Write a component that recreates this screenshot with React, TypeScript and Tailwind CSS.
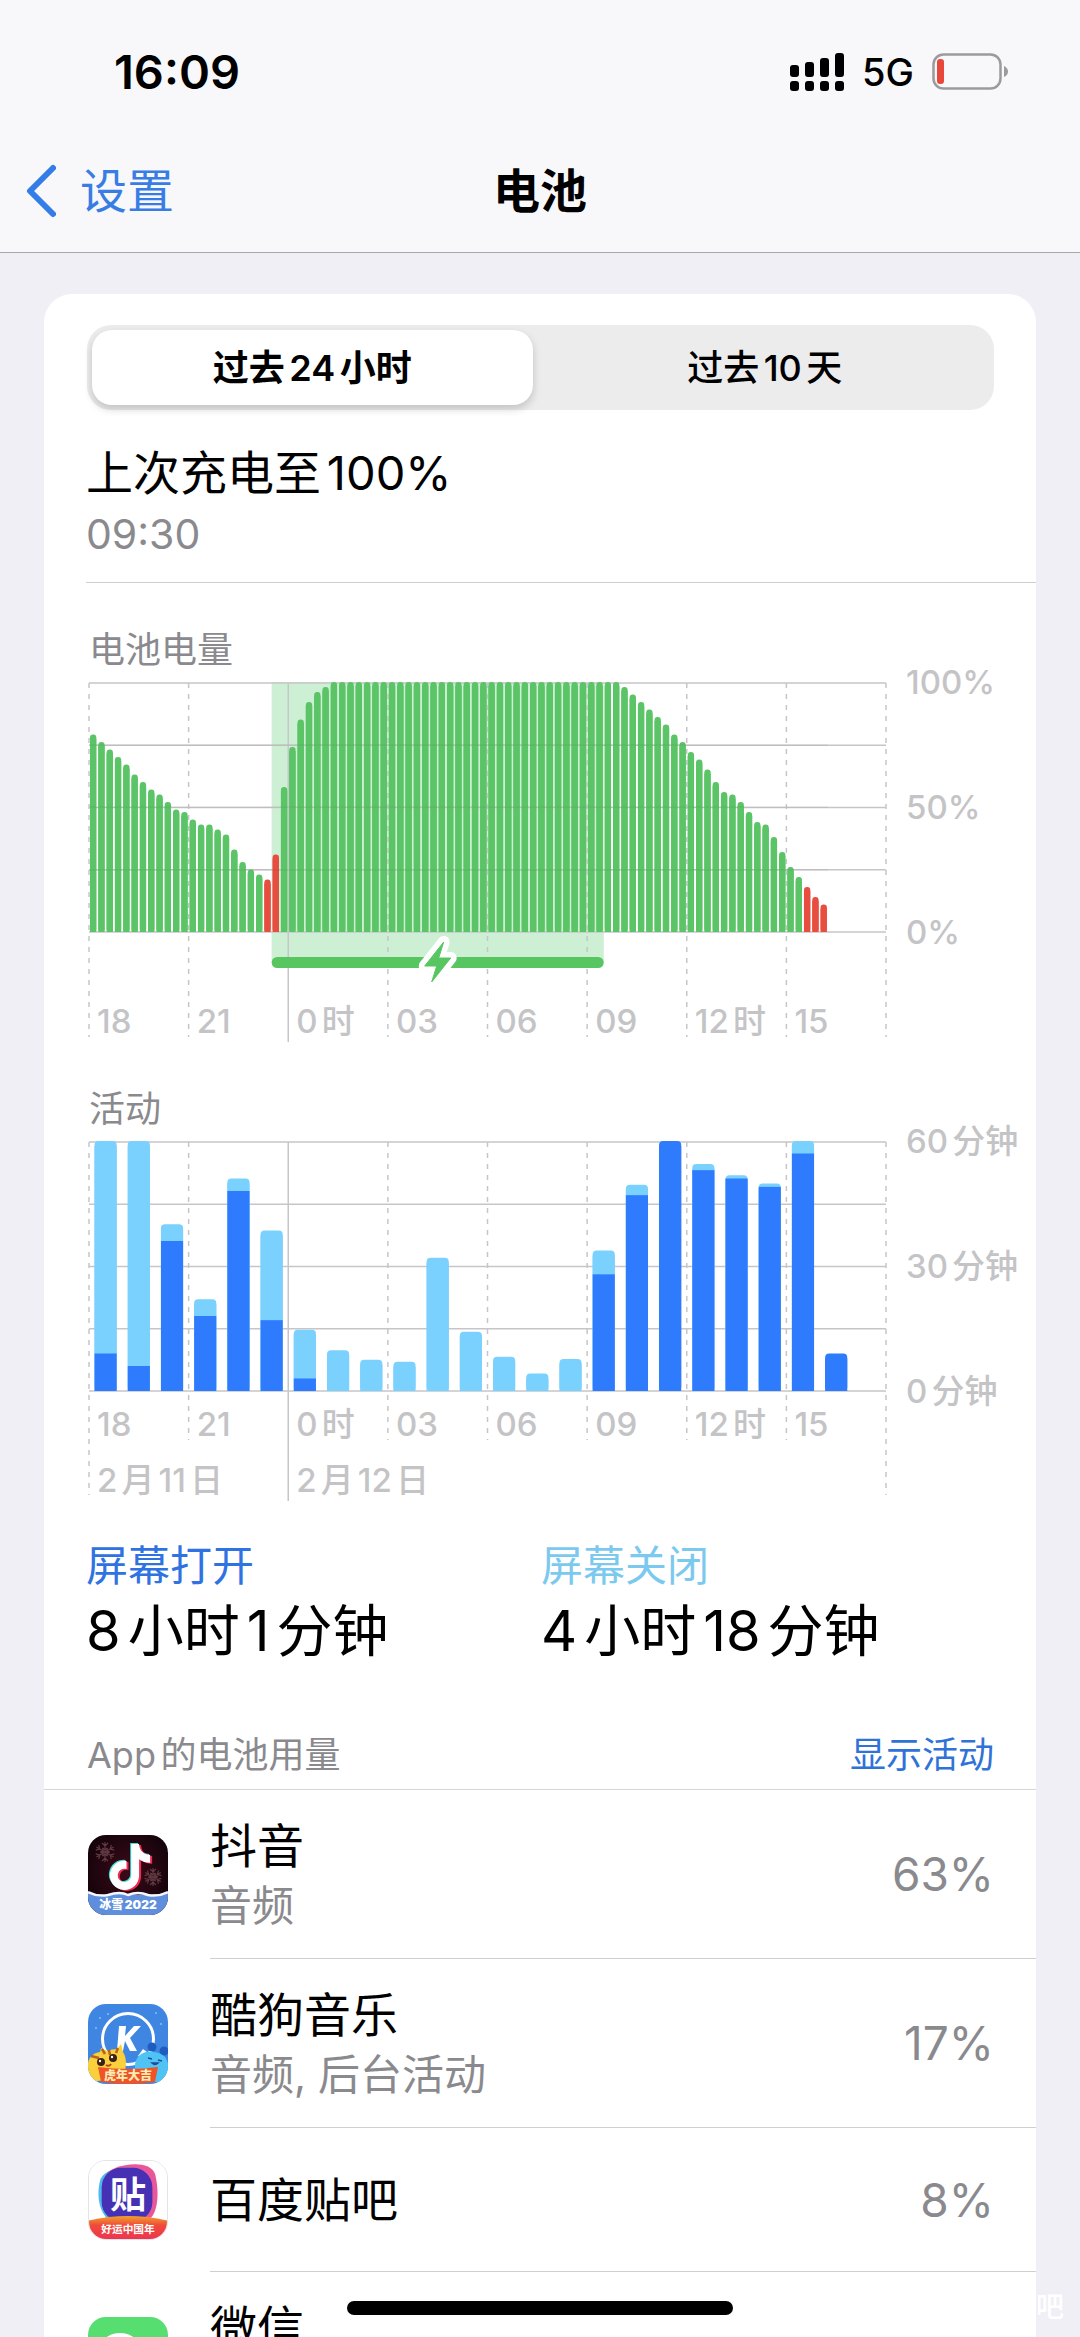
import React, { useState } from "react";
import { FaTiktok } from "react-icons/fa6";

const LEVELS: number[] = [
  79, 76, 73, 70, 67, 63, 60, 57, 55, 52, 49, 48, 45, 43, 43, 41, 39, 33, 28, 25, 23, 21, 31, 58, 74, 85, 92, 96, 98,
  ...Array.from({ length: 35 }, () => 100),
  98, 95, 92, 89, 86, 83, 79, 76, 72, 69, 65, 60, 56, 55, 52, 48, 44, 43, 38, 32, 26, 22, 18, 14, 11,
];
const LOW = new Set([21, 22, 86, 87, 88]);

// [total minutes, minutes with the screen on] for each hour
const ACTIVITY: [number, number][] = [
  [60, 9], [60, 6], [40, 36], [22, 18], [51, 48], [38.5, 17], [14.7, 3], [9.8, 0], [7.5, 0], [7, 0], [32, 0],
  [14.2, 0], [8.2, 0], [4.2, 0], [7.7, 0], [33.7, 28], [49.5, 47], [60, 60], [54.5, 53], [51.8, 51], [49.8, 49],
  [60, 57], [9, 9],
];

const HOURS = ["18", "21", "0时", "03", "06", "09", "12时", "15"];
const PLOT = 250;
const pct = (n: number) => `${n * 100}%`;

function Grid({ dashEnd, edgeEnd, solidEnd }: { dashEnd: number; edgeEnd: number; solidEnd: number }) {
  return (
    <g stroke="#c6c6ca" strokeWidth={1.5}>
      {[0, 1, 2, 3, 4].map((i) => (
        <line key={i} x1="0" x2="100%" y1={1 + (i * (PLOT - 1)) / 4} y2={1 + (i * (PLOT - 1)) / 4} />
      ))}
      {[0, 1, 2, 3, 4, 5, 6, 7, 8].map((i) => {
        const end = i === 2 ? solidEnd : i === 0 || i === 8 ? edgeEnd : dashEnd;
        return (
          <line key={i} x1={pct(i / 8)} x2={pct(i / 8)} y1="1" y2={end} strokeDasharray={i === 2 ? undefined : "5 6"} />
        );
      })}
    </g>
  );
}

function LevelChart() {
  return (
    <svg className="absolute inset-0 size-full overflow-visible" role="img" aria-label="电池电量">
      <rect x={pct(22 / 96)} width={pct(40 / 96)} y="0" height="280" fill="#cdefd3" />
      <Grid dashEnd={355} edgeEnd={355} solidEnd={360} />
      {LEVELS.map((v, i) => {
        const h = (v * PLOT) / 100;
        const fill = LOW.has(i) ? "#e84e40" : "#5bc466";
        return (
          <g key={i} fill={fill}>
            <rect x={pct((i + 0.12) / 96)} width={pct(0.76 / 96)} y={PLOT - h} height={h} rx="3" />
            <rect x={pct((i + 0.12) / 96)} width={pct(0.76 / 96)} y={PLOT - h + 4} height={h - 4} />
          </g>
        );
      })}
      <g stroke="#000000" strokeOpacity="0.08" strokeWidth="1">
        <line x1="0" x2={pct(89 / 96)} y1="63" y2="63" />
        <line x1="0" x2={pct(89 / 96)} y1="125" y2="125" />
        <line x1="0" x2={pct(89 / 96)} y1="188" y2="188" />
      </g>
      <rect x={pct(22 / 96)} width={pct(40 / 96)} y="275" height="11" rx="5.5" fill="#57c660" />
      <svg x={pct(42 / 96)} y="280" width="1" height="1" className="overflow-visible">
        <path
          d="M6 -20 L-13 4 L-1 4 L-6 20 L13 -4 L1 -4 Z"
          fill="#ffffff"
          stroke="#ffffff"
          strokeWidth="12"
          strokeLinejoin="round"
        />
        <path
          d="M6 -20 L-13 4 L-1 4 L-6 20 L13 -4 L1 -4 Z"
          fill="#57c660"
          stroke="#57c660"
          strokeWidth="1"
          strokeLinejoin="round"
        />
      </svg>
    </svg>
  );
}

function ActivityChart() {
  return (
    <svg className="absolute inset-0 size-full overflow-visible" role="img" aria-label="活动">
      <Grid dashEnd={299} edgeEnd={354} solidEnd={360} />
      {ACTIVITY.map(([total, on], i) => {
        const h = (total * PLOT) / 60;
        const hOn = (on * PLOT) / 60;
        const x = pct((i + 1 / 6) / 24);
        const w = pct(2 / 3 / 24);
        const top = total === on ? "#2f7bfd" : "#7bd1fd";
        return (
          <g key={i}>
            <rect x={x} width={w} y={PLOT - h} height={h} rx="4" fill={top} />
            <rect x={x} width={w} y={PLOT - h + 5} height={h - 5} fill={top} />
            {on > 0 && total !== on && <rect x={x} width={w} y={PLOT - hOn} height={hOn} fill="#2f7bfd" />}
          </g>
        );
      })}
    </svg>
  );
}

function ChartBlock({
  title,
  chart,
  scale,
  labelPad,
  dates,
}: {
  title: string;
  chart: React.ReactNode;
  scale: string[];
  labelPad: string;
  dates?: boolean;
}) {
  return (
    <section className="pt-[45px]">
      <h2 className="text-[36px] leading-[44px] text-[#8a8a8e]">{title}</h2>
      <div className="mt-2.5 flex text-[33px] leading-[40px] font-medium text-[#c4c4c6]">
        <div className={`relative h-[360px] flex-1 ${labelPad}`}>
          {chart}
          <div className="relative grid grid-cols-8">
            {HOURS.map((h) => (
              <span key={h} className="pl-2 whitespace-nowrap">
                {h}
              </span>
            ))}
          </div>
          {dates && (
            <div className="relative mt-4 grid grid-cols-4">
              <span className="pl-2 whitespace-nowrap">2月11日</span>
              <span className="pl-2 whitespace-nowrap">2月12日</span>
            </div>
          )}
        </div>
        <div className="-mt-5 flex h-[290px] w-[150px] flex-col justify-between pl-5 whitespace-nowrap">
          {scale.map((s) => (
            <span key={s}>{s}</span>
          ))}
        </div>
      </div>
    </section>
  );
}

function Flake({ x, y, r }: { x: number; y: number; r: number }) {
  return (
    <g transform={`translate(${x} ${y})`} stroke="#5f3a42" strokeWidth="1.2" fill="none">
      {[0, 60, 120, 180, 240, 300].map((a) => (
        <path key={a} transform={`rotate(${a})`} d={`M0 0V${-r} M-3 ${-r + 1} L0 ${-r + 4} L3 ${-r + 1} M-2.5 -4 L0 -2 L2.5 -4`} />
      ))}
    </g>
  );
}

const ICON = "size-20 shrink-0 rounded-[18px]";
const CJK = '"Noto Sans CJK SC", sans-serif';

function DouyinIcon() {
  return (
    <svg viewBox="0 0 80 80" className={ICON} aria-hidden="true">
      <defs>
        <radialGradient id="dy" cx="0.5" cy="0.45" r="0.6">
          <stop offset="0" stopColor="#3c0a18" />
          <stop offset="1" stopColor="#12030a" />
        </radialGradient>
      </defs>
      <rect width="80" height="80" fill="url(#dy)" />
      <Flake x={17} y={17} r={10} />
      <Flake x={65} y={42} r={9} />
      <FaTiktok x={18} y={8} size={46} color="#3fe0d8" />
      <FaTiktok x={21} y={10} size={46} color="#ee2a52" />
      <FaTiktok x={19} y={9} size={46} color="#ffffff" />
      <path d="M0 57 Q10 62 20 60 T40 59 T60 60 T80 57 V80 H0Z" fill="#5f8fdc" />
      <path d="M0 57 Q10 62 20 60 Q32 56 40 60 Q50 56 60 60 Q70 62 80 57" fill="none" stroke="#f4f8ff" strokeWidth="2.5" />
      <text x="40" y="74" textAnchor="middle" fontSize="12" fontWeight="900" fill="#ffffff" fontFamily={`Inter, ${CJK}`}>
        冰雪2022
      </text>
    </svg>
  );
}

function KugouIcon() {
  return (
    <svg viewBox="0 0 80 80" className={ICON} aria-hidden="true">
      <rect width="80" height="80" fill="#3f86e2" />
      <g fill="#8fbdf2">
        <circle cx="12" cy="14" r="1" />
        <circle cx="8" cy="24" r="1" />
        <circle cx="20" cy="10" r="1" />
        <circle cx="68" cy="9" r="1" />
        <circle cx="73" cy="20" r="1" />
      </g>
      <circle cx="40" cy="35" r="25.500" fill="none" stroke="#ffffff" strokeWidth="3" />
      <path d="M31 22h7l-1 10 9-10h7L42 34l7 13h-7l-5-10-2 10h-6z" fill="#ffffff" />
      <path d="M50 52l5-7 4 3-5 6z" fill="#ffffff" />
      <path d="M1 78 C-3 60 0 50 12 48 L13 44 L19 47 Q24 45 29 45 L33 40 L35 48 C40 56 38 66 34 74 Z" fill="#f9cf3c" />
      <path d="M3 52l8 2M14 45l3 5M21 46l1 5M30 44l-2 5" stroke="#b8621c" strokeWidth="2.500" />
      <circle cx="13" cy="58" r="4" fill="#3d2016" />
      <circle cx="25" cy="54" r="4" fill="#3d2016" />
      <circle cx="12" cy="57" r="1.200" fill="#ffffff" />
      <circle cx="24" cy="53" r="1.200" fill="#ffffff" />
      <path d="M18 61q3 2 5-1" stroke="#b8421c" strokeWidth="2" fill="none" />
      <circle cx="64" cy="43" r="4.500" fill="#1f5cc0" />
      <circle cx="76" cy="47" r="4.500" fill="#1f5cc0" />
      <path d="M47 64 C46 52 56 46 66 48 C76 49 82 56 80 68 L74 78 H52Z" fill="#4fc3f3" />
      <path d="M60 54l4 1M70 56l4 1M64 59q3 3 6 0z" stroke="#1c4c9c" strokeWidth="1.500" fill="#1c4c9c" />
      <path d="M10 63 Q40 67 70 63 L67 78 Q40 82 13 78Z" fill="#ee5426" />
      <text x="40" y="76" textAnchor="middle" fontSize="12" fontWeight="900" fill="#fdebb4" fontFamily={CJK}>
        虎年大吉
      </text>
    </svg>
  );
}

function TiebaIcon() {
  return (
    <svg viewBox="0 0 80 80" className={`${ICON} border border-[#e4e4e8]`} aria-hidden="true">
      <defs>
        <linearGradient id="tb" x1="0" y1="0" x2="0" y2="1">
          <stop offset="0" stopColor="#f0a12c" />
          <stop offset="0.400" stopColor="#f04a3a" />
          <stop offset="1" stopColor="#ee3550" />
        </linearGradient>
      </defs>
      <rect width="80" height="80" fill="#ffffff" />
      <path d="M14 16 C22 4 62 -4 68 14 C73 36 70 58 58 62 L22 62 C14 54 12 34 14 16Z" fill="#e9579a" />
      <path d="M12 18 C20 6 40 6 50 8 L40 62 L22 62 C8 52 8 30 12 18Z" fill="#4fb8f2" />
      <rect x="13" y="7" width="52" height="55" rx="20" fill="#4630b4" />
      <text x="40" y="48" textAnchor="middle" fontSize="37" fontWeight="700" fill="#ffffff" fontFamily={CJK}>
        贴
      </text>
      <path d="M0 61 Q40 52 80 61 V80 H0Z" fill="url(#tb)" />
      <text x="40" y="74" textAnchor="middle" fontSize="11" fontWeight="700" fill="#ffffff" fontFamily={CJK}>
        好运中国年
      </text>
    </svg>
  );
}

function WechatIcon() {
  return (
    <svg viewBox="0 0 80 80" className={ICON} aria-hidden="true">
      <rect width="80" height="80" fill="#57de70" />
      <ellipse cx="32" cy="34" rx="21" ry="18" fill="#ffffff" />
      <ellipse cx="52" cy="49" rx="17" ry="14" fill="#ffffff" />
      <circle cx="25" cy="28" r="3" fill="#57de70" />
      <circle cx="39" cy="28" r="3" fill="#57de70" />
    </svg>
  );
}

const APPS = [
  { name: "抖音", detail: "音频", share: "63%", icon: <DouyinIcon /> },
  { name: "酷狗音乐", detail: "音频, 后台活动", share: "17%", icon: <KugouIcon /> },
  { name: "百度贴吧", detail: "", share: "8%", icon: <TiebaIcon /> },
  { name: "微信", detail: "音频", share: "5%", icon: <WechatIcon /> },
];

function StatusBar() {
  return (
    <div className="flex h-36 items-center justify-between pr-[71px] pl-[114px]">
      <span className="text-[47px] leading-[56px] font-semibold">16:09</span>
      <div className="flex items-center gap-[18px]">
        <svg viewBox="0 0 54 38" className="h-[38px] w-[54px]" aria-label="信号">
          <rect x="0" y="12" width="9" height="12" rx="3" />
          <rect x="15" y="9" width="9" height="15" rx="3" />
          <rect x="30" y="5" width="9" height="19" rx="3" />
          <rect x="45" y="0" width="9" height="24" rx="3" />
          <rect x="0" y="28" width="9" height="10" rx="3" />
          <rect x="15" y="28" width="9" height="10" rx="3" />
          <rect x="30" y="28" width="9" height="10" rx="3" />
          <rect x="45" y="28" width="9" height="10" rx="3" />
        </svg>
        <span className="text-[38px] leading-[44px] font-medium">5G</span>
        <svg viewBox="0 0 77 38" className="h-[38px] w-[77px]" aria-label="电量低">
          <rect x="1.500" y="1.500" width="67" height="34" rx="10" fill="none" stroke="#9b9a9d" strokeWidth="2.500" />
          <rect x="5" y="6" width="7" height="25" rx="3" fill="#e8483c" />
          <path d="M72 13 Q76 15 76 18.500 T72 24Z" fill="#9b9a9d" />
        </svg>
      </div>
    </div>
  );
}

export default function App() {
  const [range, setRange] = useState(0);
  return (
    <div className="relative flex h-screen flex-col overflow-hidden bg-[#f0eff5] font-[Inter,'Noto_Sans_CJK_SC',sans-serif] text-black [text-autospace:normal]">
      <header className="border-b border-[#a9a9ad] bg-[#f8f8fa] pb-3.5">
        <StatusBar />
        <nav className="grid h-[94px] grid-cols-3 items-center pl-[26px] text-[47px] leading-[56px]">
          <button type="button" className="flex items-center gap-6 text-[#387de4]">
            <svg viewBox="0 0 30 54" className="h-[54px] w-[30px]" fill="none" aria-hidden="true">
              <path d="M27 4 L4 27 L27 50" stroke="#347ce8" strokeWidth="6" strokeLinecap="round" strokeLinejoin="round" />
            </svg>
            设置
          </button>
          <h1 className="-ml-[26px] text-center font-bold">电池</h1>
        </nav>
      </header>

      <main className="flex-1 overflow-y-auto px-11 pt-[41px] [scrollbar-width:none]">
        <div className="rounded-t-[28px] bg-white pt-[31px]">
          <div className="mr-[42px] ml-[43px] grid h-[85px] grid-cols-2 rounded-3xl bg-[#ececed] p-[5px] text-[36px] leading-[44px]">
            {["过去24小时", "过去10天"].map((label, i) => (
              <button
                key={label}
                type="button"
                aria-pressed={range === i}
                onClick={() => setRange(i)}
                className={
                  range === i
                    ? "mr-2 rounded-[20px] bg-white font-semibold shadow-[0_4px_8px_rgba(0,0,0,0.18)]"
                    : "rounded-[20px] font-medium"
                }
              >
                {label}
              </button>
            ))}
          </div>

          <div className="ml-[42px] border-b border-[#cfcfd2] pt-[35px] pb-[23px]">
            <p className="text-[47px] leading-[56px]">上次充电至100%</p>
            <p className="mt-2 text-[41px] leading-[50px] text-[#8a8a8e]">09:30</p>
          </div>

          <div className="pl-[45px]">
            <ChartBlock title="电池电量" chart={<LevelChart />} scale={["100%", "50%", "0%"]} labelPad="pt-[319px]" />
            <ChartBlock title="活动" chart={<ActivityChart />} scale={["60分钟", "30分钟", "0分钟"]} labelPad="pt-[263px]" dates />
          </div>

          <dl className="mt-10 ml-[42px] grid grid-cols-2">
            <div>
              <dt className="text-[42px] leading-[50px] text-[#2f72e2]">屏幕打开</dt>
              <dd className="mt-2 text-[56px] leading-[64px]">8小时1分钟</dd>
            </div>
            <div className="-ml-5">
              <dt className="text-[42px] leading-[50px] text-[#7cc9f0]">屏幕关闭</dt>
              <dd className="mt-2 text-[56px] leading-[64px]">4小时18分钟</dd>
            </div>
          </dl>

          <div className="mt-[70px] flex justify-between border-b border-[#d6d6d8] pr-[42px] pb-3 pl-[43px] text-[36px] leading-[44px]">
            <h2 className="text-[#8a8a8e]">App的电池用量</h2>
            <button type="button" className="text-[#2f72d8]">
              显示活动
            </button>
          </div>

          <ul>
            {APPS.map((app) => (
              <li key={app.name} className="flex items-center gap-[42px] pl-11">
                {app.icon}
                <div
                  className={`flex flex-1 items-center justify-between border-b border-[#cfcfd2] pr-[42px] ${
                    app.detail ? "h-[169px]" : "h-36"
                  }`}
                >
                  <div>
                    <p className="text-[47px] leading-[56px]">{app.name}</p>
                    {app.detail && <p className="mt-2 text-[42px] leading-[48px] text-[#8a8a8e]">{app.detail}</p>}
                  </div>
                  <span className="text-[46px] leading-[56px] text-[#8a8a8e]">{app.share}</span>
                </div>
              </li>
            ))}
          </ul>
        </div>
      </main>

      <span className="absolute right-4 bottom-3 text-[28px] leading-[36px] font-medium text-white">吧</span>
      <div className="absolute bottom-[22px] left-1/2 h-3.5 w-[386px] -translate-x-1/2 rounded-full bg-black" />
    </div>
  );
}
